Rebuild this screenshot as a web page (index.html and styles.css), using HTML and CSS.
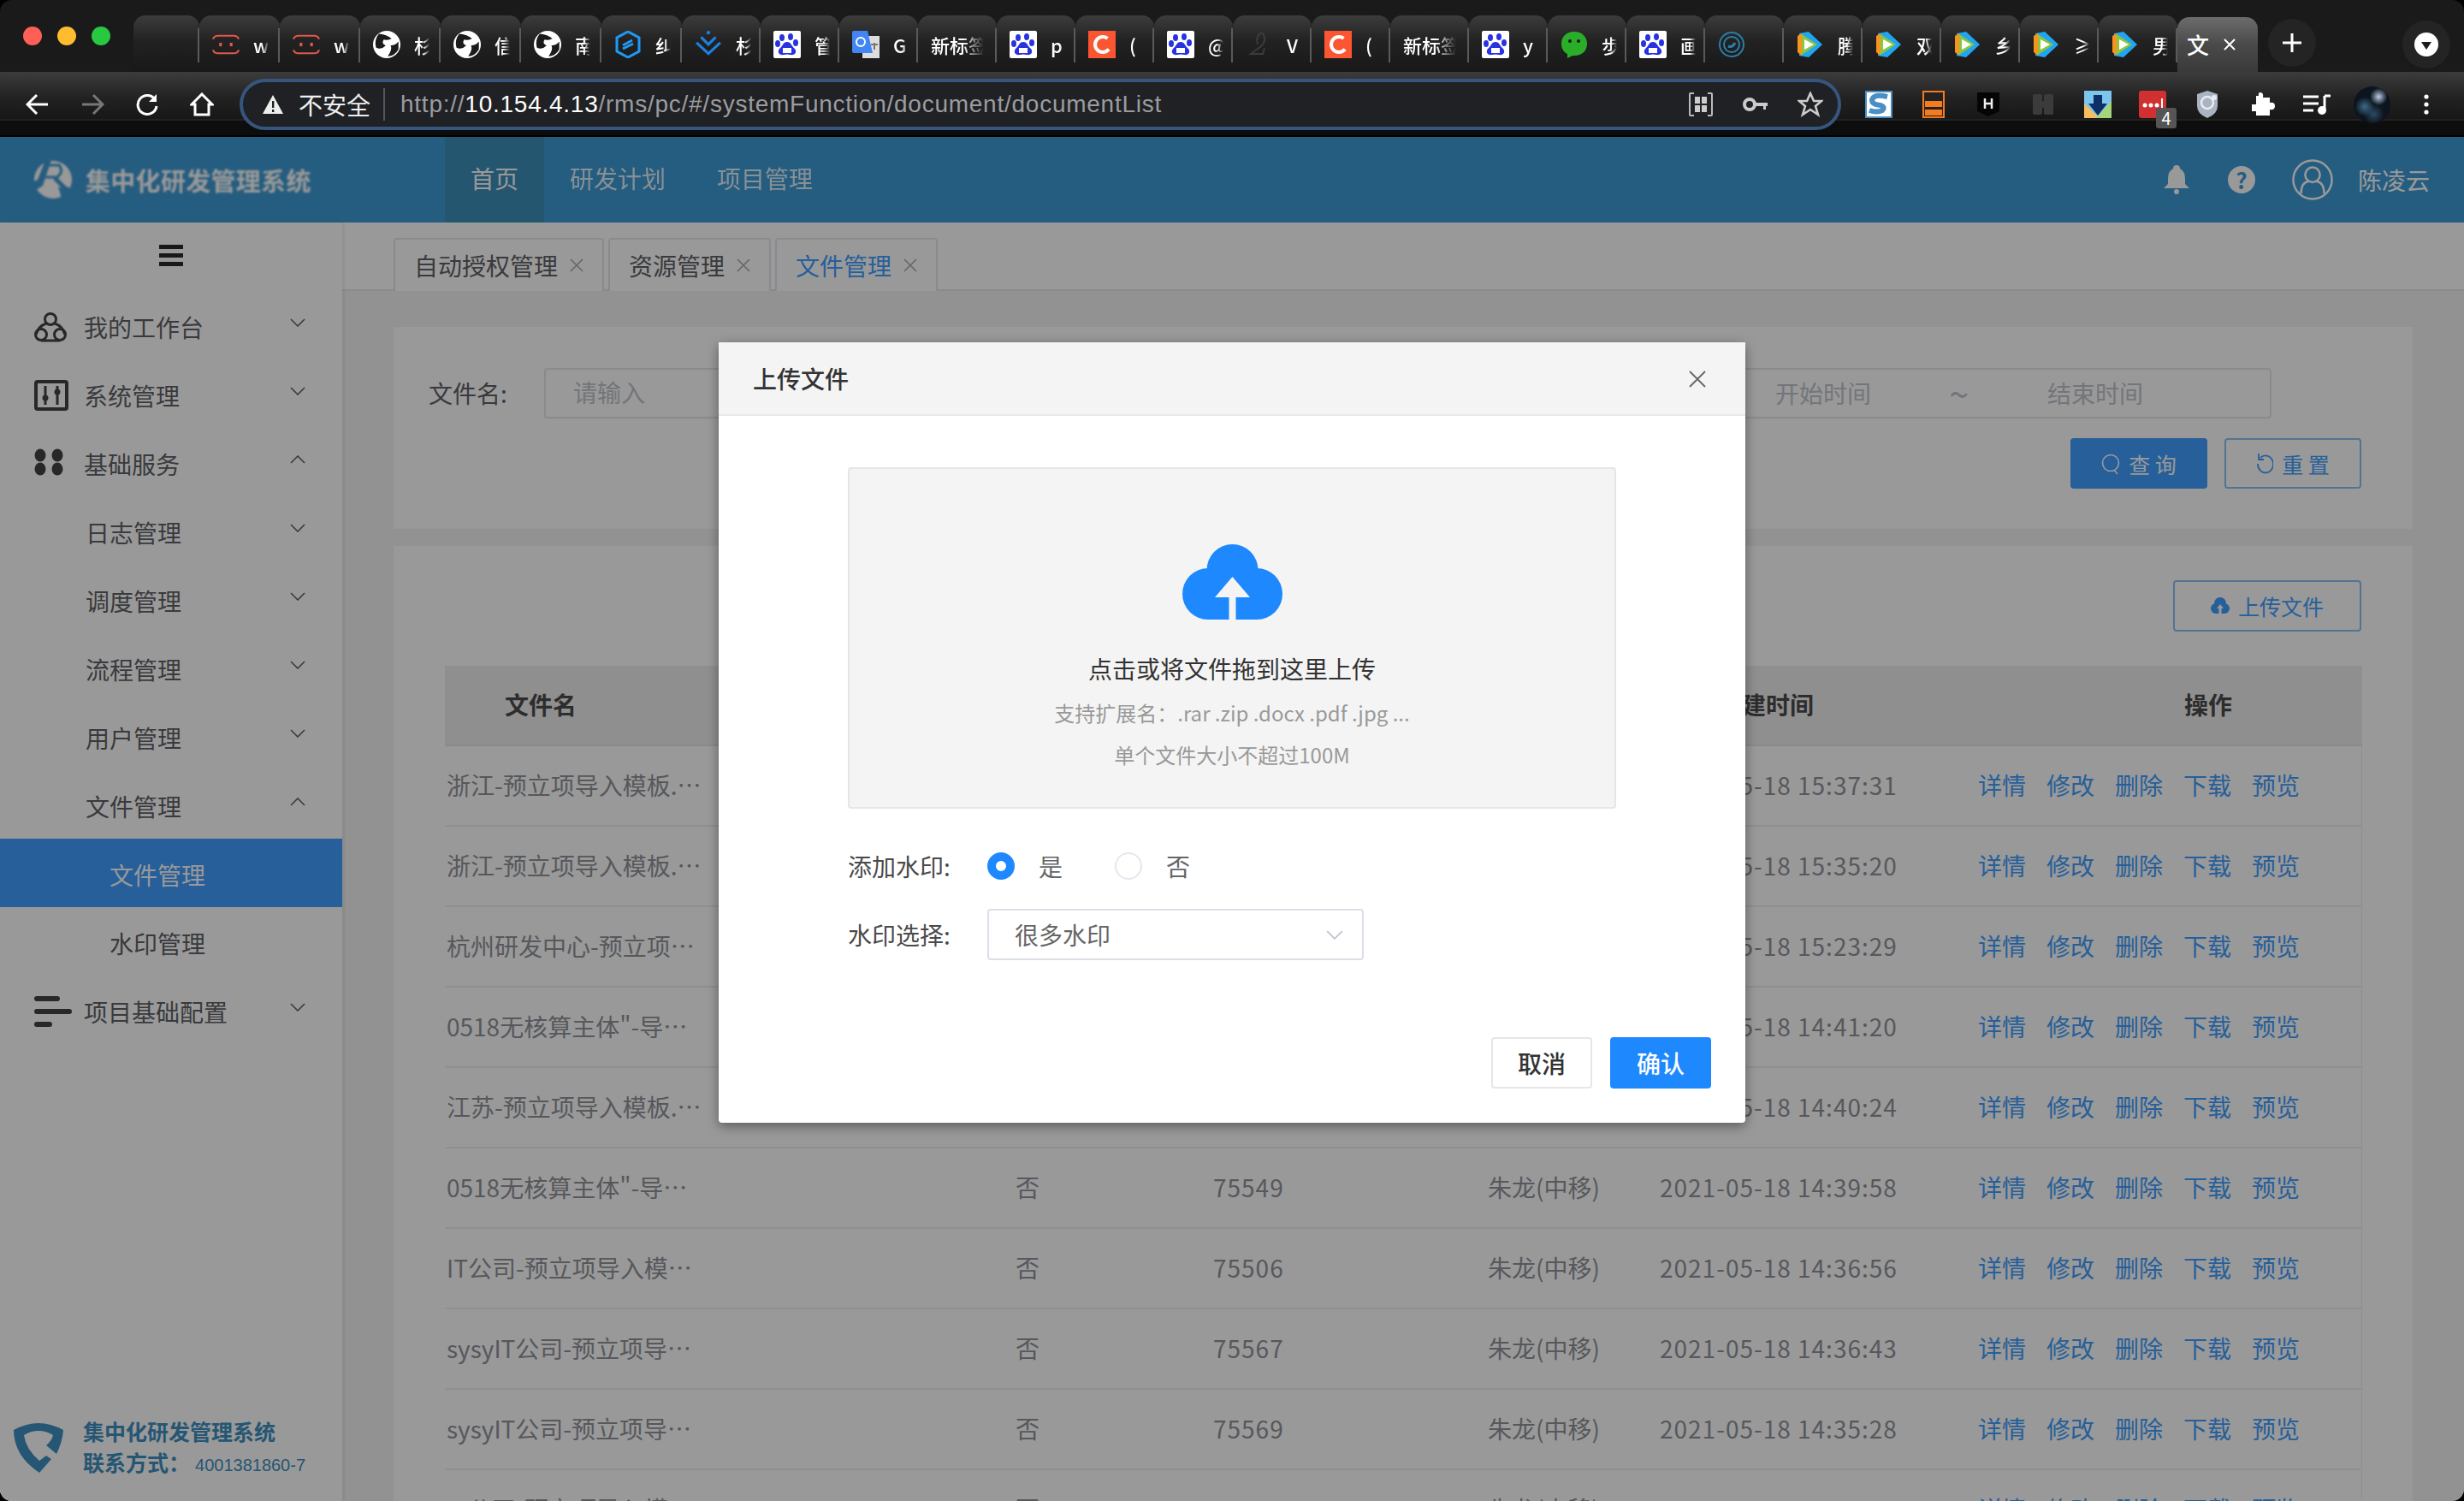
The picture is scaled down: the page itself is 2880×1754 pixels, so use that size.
FILE: index.html
```html
<!DOCTYPE html>
<html lang="zh-CN">
<head>
<meta charset="UTF-8">
<title>文件管理</title>
<link rel="stylesheet" href="styles.css">
</head>
<body>
<svg class="sprite" width="0" height="0">
    <symbol id="i-face" viewBox="0 0 31 22"><path d="M1 5Q2 1 7 1H24Q29 1 30 5M1 17Q2 21 7 21H24Q29 21 30 17" fill="none" stroke="#e2574c" stroke-width="2"/><rect x="8" y="9" width="3" height="4" fill="#e2574c"/><rect x="20" y="9" width="3" height="4" fill="#e2574c"/></symbol>
    <symbol id="i-globe" viewBox="0 0 28 28"><circle cx="14" cy="14" r="14" fill="#fff"/><path d="M6 3Q15 4 19 8Q14 10 11 9Q8 13 13 15Q8 20 3 17Q1 9 6 3ZM26 11Q23 15 18 15Q20 19 15 26Q22 26 26 19Z" fill="#1b1b1b"/></symbol>
    <symbol id="i-hex" viewBox="0 0 28 32"><path d="M14 1L27 8V24L14 31L1 24V8Z" fill="none" stroke="#1e9af5" stroke-width="3"/><path d="M8 17L19 11M8 21L20 15" stroke="#1e9af5" stroke-width="3"/></symbol>
    <symbol id="i-down" viewBox="0 0 30 30"><path d="M2 13L15 25L28 13M7 7L15 15L23 7" fill="none" stroke="#1d7fe0" stroke-width="3"/><circle cx="15" cy="2" r="2" fill="#1d7fe0"/></symbol>
    <symbol id="i-baidu" viewBox="0 0 32 32"><rect width="32" height="32" rx="2" fill="#fff"/><ellipse cx="10" cy="8" rx="3" ry="4" fill="#2932e1"/><ellipse cx="20" cy="7" rx="3" ry="4" fill="#2932e1"/><ellipse cx="5" cy="15" rx="3" ry="4" fill="#2932e1"/><ellipse cx="26" cy="14" rx="3" ry="4" fill="#2932e1"/><path d="M16 13C11 13 11 18 7 21C4 25 7 29 12 28Q16 27 20 28C25 29 28 25 25 21C21 18 21 13 16 13Z" fill="#2932e1"/><rect x="11" y="20" width="10" height="6" fill="#fff"/></symbol>
    <symbol id="i-trans" viewBox="0 0 32 32"><rect x="12" y="6" width="20" height="26" fill="#ddd"/><path d="M0 2Q0 0 2 0H18L24 26H2Q0 26 0 24Z" fill="#4285f4"/><circle cx="10" cy="13" r="5" fill="none" stroke="#fff" stroke-width="2"/><path d="M22 16H30M26 14V22" stroke="#777" stroke-width="2"/></symbol>
    <symbol id="i-csdn" viewBox="0 0 32 32"><rect width="32" height="32" fill="#fc5531"/><circle cx="17" cy="16" r="9" fill="none" stroke="#fff" stroke-width="4" stroke-dasharray="42 15" stroke-dashoffset="-6"/></symbol>
    <symbol id="i-gray" viewBox="0 0 28 32"><path d="M17 2Q24 10 16 18L4 27H18L20 20M17 2Q9 6 12 16" fill="none" stroke="#3b3b3b" stroke-width="2"/></symbol>
    <symbol id="i-wx" viewBox="0 0 32 32"><path d="M16 1C7 1 1 7 1 15C1 21 4 25 8 27L8 32L14 29C24 30 31 24 31 15C31 7 25 1 16 1Z" fill="#2aae2a"/><circle cx="11" cy="12" r="2" fill="#1b1b1b"/><circle cx="21" cy="12" r="2" fill="#1b1b1b"/></symbol>
    <symbol id="i-swirl" viewBox="0 0 32 32"><circle cx="16" cy="16" r="14" fill="none" stroke="#2a7fa8" stroke-width="2"/><circle cx="16" cy="16" r="9" fill="none" stroke="#2a7fa8" stroke-width="2"/><path d="M12 18Q17 20 20 14" fill="none" stroke="#2a7fa8" stroke-width="3"/></symbol>
    <symbol id="i-play" viewBox="0 0 32 32"><path d="M3 3L14 1L30 16L14 31L3 29Z" fill="#22a5f1"/><path d="M1 6L6 3V29L1 25Z" fill="#f7941d"/><path d="M6 4L24 16L6 28Z" fill="#8cc63f"/><path d="M9 10L20 16L9 22Z" fill="#fff"/></symbol>
    <symbol id="i-chev" viewBox="0 0 18 10"><path d="M1 1L9 9L17 1" fill="none" stroke="currentColor" stroke-width="1.6"/></symbol>
</svg>

<div class="window">
    <div class="tabstrip">
        <div class="lights"><i class="red"></i><i class="amber"></i><i class="green"></i></div>
        <div class="tab tab-blank"></div>
        <div class="tab tab-wide"><svg class="fav fav-face"><use href="#i-face"/></svg><span class="tab-title">w</span></div>
        <div class="tab tab-wide"><svg class="fav fav-face"><use href="#i-face"/></svg><span class="tab-title">w</span></div>
        <div class="tab tab-wide"><svg class="fav"><use href="#i-globe"/></svg><span class="tab-title">杉</span></div>
        <div class="tab tab-wide"><svg class="fav"><use href="#i-globe"/></svg><span class="tab-title">信</span></div>
        <div class="tab tab-wide"><svg class="fav"><use href="#i-globe"/></svg><span class="tab-title">南</span></div>
        <div class="tab tab-wide"><svg class="fav"><use href="#i-hex"/></svg><span class="tab-title">纠</span></div>
        <div class="tab"><svg class="fav"><use href="#i-down"/></svg><span class="tab-title">杉</span></div>
        <div class="tab"><svg class="fav"><use href="#i-baidu"/></svg><span class="tab-title">管</span></div>
        <div class="tab"><svg class="fav"><use href="#i-trans"/></svg><span class="tab-title">G</span></div>
        <div class="tab tab-newpage"><span class="tab-title">新标签</span></div>
        <div class="tab"><svg class="fav"><use href="#i-baidu"/></svg><span class="tab-title">p</span></div>
        <div class="tab"><svg class="fav"><use href="#i-csdn"/></svg><span class="tab-title">(</span></div>
        <div class="tab"><svg class="fav"><use href="#i-baidu"/></svg><span class="tab-title">@</span></div>
        <div class="tab"><svg class="fav"><use href="#i-gray"/></svg><span class="tab-title">V</span></div>
        <div class="tab"><svg class="fav"><use href="#i-csdn"/></svg><span class="tab-title">(</span></div>
        <div class="tab tab-newpage"><span class="tab-title">新标签</span></div>
        <div class="tab"><svg class="fav"><use href="#i-baidu"/></svg><span class="tab-title">y</span></div>
        <div class="tab"><svg class="fav"><use href="#i-wx"/></svg><span class="tab-title">歩</span></div>
        <div class="tab"><svg class="fav"><use href="#i-baidu"/></svg><span class="tab-title">画</span></div>
        <div class="tab"><svg class="fav"><use href="#i-swirl"/></svg><span class="tab-title"></span></div>
        <div class="tab"><svg class="fav"><use href="#i-play"/></svg><span class="tab-title">腾</span></div>
        <div class="tab"><svg class="fav"><use href="#i-play"/></svg><span class="tab-title">双</span></div>
        <div class="tab"><svg class="fav"><use href="#i-play"/></svg><span class="tab-title">乡</span></div>
        <div class="tab"><svg class="fav"><use href="#i-play"/></svg><span class="tab-title">≥</span></div>
        <div class="tab"><svg class="fav"><use href="#i-play"/></svg><span class="tab-title">男</span></div>
        <div class="tab tab-active"><span class="tab-title">文</span><svg class="tab-close" width="16" height="16" viewBox="0 0 16 16"><path d="M2 2L14 14M14 2L2 14" stroke="#fff" stroke-width="2"/></svg></div>
        <div class="newtab"><svg width="24" height="24" viewBox="0 0 24 24"><path d="M12 1V23M1 12H23" stroke="#fff" stroke-width="3"/></svg></div>
        <div class="tabmenu"><svg width="28" height="28" viewBox="0 0 28 28"><circle cx="14" cy="14" r="14" fill="#fff"/><path d="M8 11H20L14 20Z" fill="#1b1b1b"/></svg></div>
    </div>

    <div class="toolbar">
        <div class="navbtn"><svg width="28" height="28" viewBox="0 0 28 28"><path d="M26 14H3M13 3L2 14L13 25" fill="none" stroke="#fff" stroke-width="3"/></svg></div>
        <div class="navbtn"><svg width="28" height="28" viewBox="0 0 28 28"><path d="M2 14H25M15 3L26 14L15 25" fill="none" stroke="#777" stroke-width="3"/></svg></div>
        <div class="navbtn"><svg width="28" height="28" viewBox="0 0 28 28"><path d="M23 8A11 11 0 1 0 25 16" fill="none" stroke="#fff" stroke-width="3"/><path d="M25 2V11H16Z" fill="#fff"/></svg></div>
        <div class="navbtn"><svg width="28" height="28" viewBox="0 0 28 28"><path d="M14 2L26 14H22V26H6V14H2Z" fill="none" stroke="#fff" stroke-width="3"/></svg></div>
        <div class="urlbar">
            <svg class="warn" width="26" height="24" viewBox="0 0 26 24"><path d="M13 1L25 23H1Z" fill="#eee"/><rect x="12" y="8" width="2.4" height="8" fill="#202124"/><rect x="12" y="18" width="2.4" height="3" fill="#202124"/></svg>
            <span class="url-state">不安全</span>
            <span class="url-rule"></span>
            <span class="url-text">http://<b>10.154.4.13</b>/rms/pc/#/systemFunction/document/documentList</span>
            <div class="url-actions">
                <svg width="30" height="30" viewBox="0 0 30 30"><path d="M7 2H3Q2 2 2 3V27Q2 28 3 28H7M23 2H27Q28 2 28 3V27Q28 28 27 28H23" fill="none" stroke="#bbb" stroke-width="2"/><rect x="8" y="6" width="6" height="8" fill="#ccc"/><rect x="16" y="6" width="6" height="8" fill="#ccc"/><rect x="8" y="16" width="6" height="8" fill="#ccc"/><rect x="16" y="16" width="6" height="8" fill="#ccc"/></svg>
                <svg width="30" height="30" viewBox="0 0 30 30"><circle cx="8" cy="15" r="6" fill="none" stroke="#ccc" stroke-width="4"/><path d="M14 13H29V17H27V21H24V17H14Z" fill="#ccc"/></svg>
                <svg width="30" height="30" viewBox="0 0 30 30"><path d="M15 2L19 11H28L21 17L24 27L15 21L6 27L9 17L2 11H11Z" fill="none" stroke="#ccc" stroke-width="2.6"/></svg>
            </div>
        </div>
        <div class="ext"><svg width="32" height="32" viewBox="0 0 32 32"><rect width="32" height="32" fill="#fff"/><rect width="32" height="32" fill="none" stroke="#4a8fc4" stroke-width="4"/><path d="M26 7Q10 3 8 11Q8 16 18 17Q24 19 20 23Q14 26 5 23" fill="none" stroke="#4a8fc4" stroke-width="6"/></svg></div>
        <div class="ext"><svg width="26" height="32" viewBox="0 0 26 32"><rect x="1" y="1" width="24" height="30" fill="#222" stroke="#f47b20" stroke-width="2"/><rect x="3" y="12" width="20" height="7" fill="#f47b20"/><rect x="3" y="22" width="20" height="7" fill="#f47b20"/></svg></div>
        <div class="ext"><svg width="28" height="28" viewBox="0 0 28 28"><path d="M1 0H27V22L14 28L1 22Z" fill="#050505"/><path d="M10 7V19M18 7V19M10 13H18" stroke="#eee" stroke-width="2.5"/></svg></div>
        <div class="ext"><svg width="24" height="24" viewBox="0 0 24 24"><rect width="11" height="24" rx="2" fill="#3b3b3b"/><rect x="13" width="11" height="24" rx="2" fill="#3b3b3b"/><circle cx="12" cy="12" r="4" fill="#3b3b3b"/></svg></div>
        <div class="ext"><svg width="32" height="32" viewBox="0 0 32 32"><rect width="32" height="32" fill="#7cc5ec"/><path d="M0 32V15L16 30V32Z" fill="#f6bd60"/><path d="M32 12V32H14L16 30Z" fill="#a5d47a"/><path d="M11 5H21V15H27L16 29L5 15H11Z" fill="#0d2f66"/></svg></div>
        <div class="ext ext-badged"><svg width="32" height="32" viewBox="0 0 32 32"><rect width="32" height="32" rx="3" fill="#d13030"/><circle cx="7" cy="17" r="2.5" fill="#fff"/><circle cx="14" cy="17" r="2.5" fill="#fff"/><circle cx="21" cy="17" r="2.5" fill="#fff"/><rect x="26" y="9" width="2" height="11" fill="#fff"/></svg><span class="ext-badge">4</span></div>
        <div class="ext"><svg width="24" height="32" viewBox="0 0 24 32"><path d="M12 0L24 4V18Q24 27 12 32Q0 27 0 18V4Z" fill="#aab3c2"/><circle cx="12" cy="14" r="7" fill="none" stroke="#e8ecf2" stroke-width="2.5"/><circle cx="20" cy="8" r="3" fill="#e8ecf2"/></svg></div>
        <div class="ext"><svg width="30" height="28" viewBox="0 0 30 28"><path d="M11 4H8V14H3V22H8V27H24V20Q30 21 30 16Q30 11 24 12V6H16Q17 0 13 0Q10 0 11 4Z" fill="#fff"/></svg></div>
        <div class="ext"><svg width="32" height="24" viewBox="0 0 32 24"><path d="M0 3H18M0 11H18M0 19H12" stroke="#fff" stroke-width="3"/><path d="M25 2H32M25 2V19" stroke="#fff" stroke-width="3"/><circle cx="22" cy="19" r="5" fill="#fff"/></svg></div>
        <div class="ext"><div class="avatar"></div></div>
        <div class="ext"><svg width="6" height="24" viewBox="0 0 6 24"><circle cx="3" cy="3" r="2.6" fill="#fff"/><circle cx="3" cy="12" r="2.6" fill="#fff"/><circle cx="3" cy="21" r="2.6" fill="#fff"/></svg></div>
    </div>

    <div class="app">
        <header class="topbar">
            <div class="logo">
                <svg width="48" height="44" viewBox="0 0 48 44">
                    <circle cx="24" cy="22" r="22" fill="#fff"/>
                    <path d="M15 -1L22 -1L12 29L-2 38L-4 26L6 22Z" fill="#3f9bd5"/>
                    <path d="M-2 0H12L3 10L0 36H-2Z" fill="#3f9bd5"/>
                    <path d="M18 5H31Q37 12 29 19H15" fill="none" stroke="#3f9bd5" stroke-width="3"/>
                    <path d="M26 20L38 32L48 36" fill="none" stroke="#3f9bd5" stroke-width="5"/>
                    <path d="M20 24L40 38L48 44H-2L2 34Z" fill="#3f9bd5" opacity="0"/>
                    <path d="M30 30L48 38V44H34Z" fill="#3f9bd5"/>
                </svg>
                <span class="logo-name">集中化研发管理系统</span>
            </div>
            <nav class="topnav">
                <a class="topnav-item is-active">首页</a>
                <a class="topnav-item">研发计划</a>
                <a class="topnav-item">项目管理</a>
            </nav>
            <div class="userbox">
                <svg class="bell" width="32" height="34" viewBox="0 0 32 34"><path d="M16 0Q20 0 20 4Q26 7 26 16V22L31 27H1L6 22V16Q6 7 12 4Q12 0 16 0Z" fill="#fff"/><rect x="13" y="28" width="6" height="6" rx="3" fill="#fff"/></svg>
                <span class="help">?</span>
                <svg class="user" width="48" height="48" viewBox="0 0 50 50"><circle cx="25" cy="25" r="23.5" fill="none" stroke="#fff" stroke-width="2.6"/><circle cx="25" cy="19" r="9" fill="none" stroke="#fff" stroke-width="2.6"/><path d="M11 42Q11 28 20 27M39 42Q39 28 30 27" fill="none" stroke="#fff" stroke-width="2.6"/></svg>
                <span class="username">陈凌云</span>
            </div>
        </header>

        <div class="main">
            <aside class="side">
                <div class="burger"><i></i><i></i><i></i></div>
                <div class="menu-item">
                    <svg class="menu-icon" width="38" height="36" viewBox="0 0 38 36"><circle cx="19" cy="9" r="6.5" fill="none" stroke="#444" stroke-width="3"/><circle cx="8" cy="27" r="6.5" fill="none" stroke="#444" stroke-width="3"/><circle cx="30" cy="27" r="6.5" fill="none" stroke="#444" stroke-width="3"/><path d="M14 14Q5 17 2 27M24 14Q33 17 36 27M8 34H30" fill="none" stroke="#444" stroke-width="3"/></svg>
                    <span>我的工作台</span><svg class="chev"><use href="#i-chev"/></svg>
                </div>
                <div class="menu-item">
                    <svg class="menu-icon" width="40" height="36" viewBox="0 0 40 36"><rect x="2" y="2" width="36" height="32" rx="2" fill="none" stroke="#444" stroke-width="4"/><path d="M13 7V29M27 7V29" stroke="#444" stroke-width="3"/><circle cx="13" cy="21" r="3.5" fill="#444"/><circle cx="27" cy="14" r="3.5" fill="#444"/></svg>
                    <span>系统管理</span><svg class="chev"><use href="#i-chev"/></svg>
                </div>
                <div class="menu-item">
                    <svg class="menu-icon" width="34" height="32" viewBox="0 0 34 32"><ellipse cx="7" cy="8" rx="6.5" ry="7.5" fill="#444"/><ellipse cx="27" cy="8" rx="6.5" ry="7.5" fill="#444"/><ellipse cx="7" cy="24" rx="6.5" ry="7.5" fill="#444"/><ellipse cx="27" cy="24" rx="6.5" ry="7.5" fill="#444"/></svg>
                    <span>基础服务</span><svg class="chev chev-up"><use href="#i-chev"/></svg>
                </div>
                <div class="menu-item menu-sub"><span>日志管理</span><svg class="chev"><use href="#i-chev"/></svg></div>
                <div class="menu-item menu-sub"><span>调度管理</span><svg class="chev"><use href="#i-chev"/></svg></div>
                <div class="menu-item menu-sub"><span>流程管理</span><svg class="chev"><use href="#i-chev"/></svg></div>
                <div class="menu-item menu-sub"><span>用户管理</span><svg class="chev"><use href="#i-chev"/></svg></div>
                <div class="menu-item menu-sub"><span>文件管理</span><svg class="chev chev-up"><use href="#i-chev"/></svg></div>
                <div class="menu-item menu-leaf is-active"><span>文件管理</span></div>
                <div class="menu-item menu-leaf"><span>水印管理</span></div>
                <div class="menu-item">
                    <svg class="menu-icon" width="44" height="36" viewBox="0 0 44 36"><path d="M3 3H27M3 18H41M3 33H18" stroke="#444" stroke-width="6" stroke-linecap="round"/></svg>
                    <span>项目基础配置</span><svg class="chev"><use href="#i-chev"/></svg>
                </div>
                <div class="side-foot">
                    <svg width="58" height="58" viewBox="0 0 58 58"><path d="M29 0Q43 0 58 8Q57 22 50 36L38 26Q45 20 46 14Q38 9 29 9Q20 9 12 14Q14 30 30 44L38 38L44 42L30 58Q0 38 0 8Q15 0 29 0Z" fill="#3f8fc0"/></svg>
                    <div class="foot-text">
                        <div class="foot-name">集中化研发管理系统</div>
                        <div class="foot-phone">联系方式：<span>4001381860-7</span></div>
                    </div>
                </div>
            </aside>

            <section class="content">
                <div class="pagetabs">
                    <div class="pagetab">自动授权管理<svg width="18" height="18" viewBox="0 0 18 18"><path d="M2 2L16 16M16 2L2 16" stroke="#aaa" stroke-width="1.6"/></svg></div>
                    <div class="pagetab">资源管理<svg width="18" height="18" viewBox="0 0 18 18"><path d="M2 2L16 16M16 2L2 16" stroke="#aaa" stroke-width="1.6"/></svg></div>
                    <div class="pagetab is-active">文件管理<svg width="18" height="18" viewBox="0 0 18 18"><path d="M2 2L16 16M16 2L2 16" stroke="#aaa" stroke-width="1.6"/></svg></div>
                </div>

                <div class="page">
                    <div class="card card-filter">
                        <div class="filter-row">
                            <label class="filter-label">文件名:</label>
                            <div class="input">请输入</div>
                            <div class="daterange">
                                <span class="date-start">开始时间</span>
                                <span class="date-sep">~</span>
                                <span>结束时间</span>
                            </div>
                        </div>
                        <div class="filter-btns">
                            <button class="btn btn-primary"><svg width="22" height="26" viewBox="0 0 22 26"><circle cx="11" cy="12" r="9.5" fill="none" stroke="#fff" stroke-width="1.6"/><path d="M15 20L19 25" stroke="#fff" stroke-width="1.6"/></svg>查 询</button>
                            <button class="btn btn-line"><svg width="20" height="26" viewBox="0 0 20 26"><path d="M5 6A9 10 0 1 1 2 13" fill="none" stroke="#409eff" stroke-width="1.8"/><path d="M3 1V8H9" fill="none" stroke="#409eff" stroke-width="1.8"/></svg>重 置</button>
                        </div>
                    </div>

                    <div class="card card-list">
                        <div class="list-tools">
                            <button class="btn btn-line btn-upload"><svg width="22" height="20" viewBox="0 0 22 20"><circle cx="6" cy="13" r="6" fill="#409eff"/><circle cx="16" cy="13" r="6" fill="#409eff"/><circle cx="11" cy="7" r="7" fill="#409eff"/><rect x="6" y="10" width="10" height="9" fill="#409eff"/><path d="M11 8L15 13H12.5V20H9.5V13H7Z" fill="#fff"/></svg>上传文件</button>
                        </div>
                        <table class="doc-table">
                            <colgroup><col class="col-name"><col class="col-mark"><col class="col-id"><col class="col-user"><col class="col-time"><col class="col-act"></colgroup>
                            <thead>
                                <tr><th class="th-name">文件名</th><th></th><th></th><th></th><th class="th-time">创建时间</th><th class="th-act">操作</th></tr>
                            </thead>
                            <tbody>
                                <tr><td><div class="fname">浙江-预立项导入模板.xlsx</div></td><td></td><td></td><td></td><td class="num">2021-05-18 15:37:31</td><td class="acts"><a>详情</a><a>修改</a><a>删除</a><a>下载</a><a>预览</a></td></tr>
                                <tr><td><div class="fname">浙江-预立项导入模板.xlsx</div></td><td></td><td></td><td></td><td class="num">2021-05-18 15:35:20</td><td class="acts"><a>详情</a><a>修改</a><a>删除</a><a>下载</a><a>预览</a></td></tr>
                                <tr><td><div class="fname">杭州研发中心-预立项导入模板.xlsx</div></td><td></td><td></td><td></td><td class="num">2021-05-18 15:23:29</td><td class="acts"><a>详情</a><a>修改</a><a>删除</a><a>下载</a><a>预览</a></td></tr>
                                <tr><td><div class="fname">0518无核算主体"-导入模板.xlsx</div></td><td></td><td></td><td></td><td class="num">2021-05-18 14:41:20</td><td class="acts"><a>详情</a><a>修改</a><a>删除</a><a>下载</a><a>预览</a></td></tr>
                                <tr><td><div class="fname">江苏-预立项导入模板.xlsx</div></td><td></td><td></td><td></td><td class="num">2021-05-18 14:40:24</td><td class="acts"><a>详情</a><a>修改</a><a>删除</a><a>下载</a><a>预览</a></td></tr>
                                <tr><td><div class="fname">0518无核算主体"-导入模板.xlsx</div></td><td>否</td><td class="num">75549</td><td>朱龙(中移)</td><td class="num">2021-05-18 14:39:58</td><td class="acts"><a>详情</a><a>修改</a><a>删除</a><a>下载</a><a>预览</a></td></tr>
                                <tr><td><div class="fname">IT公司-预立项导入模板.xlsx</div></td><td>否</td><td class="num">75506</td><td>朱龙(中移)</td><td class="num">2021-05-18 14:36:56</td><td class="acts"><a>详情</a><a>修改</a><a>删除</a><a>下载</a><a>预览</a></td></tr>
                                <tr><td><div class="fname">sysyIT公司-预立项导入模板.xlsx</div></td><td>否</td><td class="num">75567</td><td>朱龙(中移)</td><td class="num">2021-05-18 14:36:43</td><td class="acts"><a>详情</a><a>修改</a><a>删除</a><a>下载</a><a>预览</a></td></tr>
                                <tr><td><div class="fname">sysyIT公司-预立项导入模板.xlsx</div></td><td>否</td><td class="num">75569</td><td>朱龙(中移)</td><td class="num">2021-05-18 14:35:28</td><td class="acts"><a>详情</a><a>修改</a><a>删除</a><a>下载</a><a>预览</a></td></tr>
                                <tr><td><div class="fname">IT公司-预立项导入模板.xlsx</div></td><td>否</td><td class="num">75570</td><td>朱龙(中移)</td><td class="num">2021-05-18 14:35:10</td><td class="acts"><a>详情</a><a>修改</a><a>删除</a><a>下载</a><a>预览</a></td></tr>
                            </tbody>
                        </table>
                    </div>
                </div>
            </section>
        </div>

        <div class="mask"></div>

        <div class="modal">
            <div class="modal-head">
                <span class="modal-title">上传文件</span>
                <svg class="modal-x" width="20" height="20" viewBox="0 0 20 20"><path d="M1 1L19 19M19 1L1 19" stroke="#666" stroke-width="1.8"/></svg>
            </div>
            <div class="modal-body">
                <div class="dropzone">
                    <svg class="cloud" width="117" height="88" viewBox="0 0 117 88">
                        <circle cx="30" cy="58" r="30" fill="#1e88ff"/><circle cx="87" cy="58" r="30" fill="#1e88ff"/><circle cx="58.5" cy="30" r="30" fill="#1e88ff"/><rect x="30" y="40" width="57" height="48" fill="#1e88ff"/>
                        <path d="M58.5 38L79 62H62.5V88H54.5V62H38Z" fill="#f4f4f4"/>
                    </svg>
                    <div class="drop-main">点击或将文件拖到这里上传</div>
                    <div class="drop-hint">支持扩展名：.rar .zip .docx .pdf .jpg ...</div>
                    <div class="drop-hint drop-limit">单个文件大小不超过100M</div>
                </div>
                <div class="form-row">
                    <label class="form-label">添加水印:</label>
                    <span class="radio is-on"></span><span class="radio-text">是</span>
                    <span class="radio"></span><span class="radio-text">否</span>
                </div>
                <div class="form-row">
                    <label class="form-label">水印选择:</label>
                    <div class="select">很多水印<svg class="chev"><use href="#i-chev"/></svg></div>
                </div>
            </div>
            <div class="modal-foot">
                <button class="mbtn">取消</button>
                <button class="mbtn mbtn-ok">确认</button>
            </div>
        </div>
    </div>
</div>
</body>
</html>
```

FILE: styles.css
```css
* {
    box-sizing: border-box;
}

html, body {
    margin: 0;
    background: #000;
}

body {
    font-family: "Noto Sans CJK SC", "Liberation Sans", sans-serif;
    font-size: 28px;
    color: #606266;
}

.sprite {
    position: absolute;
}

.window {
    width: 2880px;
    height: 1754px;
    display: flex;
    flex-direction: column;
    overflow: hidden;
    border-radius: 14px;
}

/* browser tabs */
.tabstrip {
    height: 84px;
    flex: none;
    display: flex;
    background: #1a1a1a;
    color: #fff;
}

.lights {
    width: 156px;
    flex: none;
    display: flex;
    align-items: center;
    gap: 18px;
    padding-left: 27px;
}

.lights i {
    width: 22px;
    height: 22px;
    border-radius: 50%;
}

.red { background: #fe5f57; }
.amber { background: #febc2e; }
.green { background: #28c840; }

.tab {
    position: relative;
    width: 92px;
    height: 66px;
    margin-top: 18px;
    flex: none;
    display: flex;
    align-items: flex-start;
    gap: 16px;
    padding: 18px 0 0 15px;
    border-radius: 14px 14px 0 0;
    background: linear-gradient(#3c3c3c, #222 45%, #181818);
}

.tab::after {
    content: "";
    position: absolute;
    right: 0;
    top: 15px;
    width: 2px;
    height: 40px;
    background: #5a5a5a;
}

.tab-blank { width: 77px; }
.tab-wide { width: 94px; }

.fav {
    width: 32px;
    height: 32px;
    flex: none;
}

.tab-title {
    width: 18px;
    height: 32px;
    overflow: hidden;
    white-space: nowrap;
    font-size: 22px;
    line-height: 32px;
    font-weight: 500;
    -webkit-mask-image: linear-gradient(90deg, #000 60%, transparent);
    mask-image: linear-gradient(90deg, #000 60%, transparent);
}

.tab-newpage .tab-title {
    width: 62px;
    font-size: 22px;
}

.tab-active {
    width: 94px;
    margin-top: 20px;
    height: 64px;
    gap: 16px;
    padding: 16px 0 0 11px;
    background: linear-gradient(#6c6c6c, #4a4a4a 50%, #3a3a3a);
}

.tab-active::after {
    display: none;
}

.tab-active .tab-title {
    width: 26px;
    font-size: 26px;
    -webkit-mask-image: none;
    mask-image: none;
}

.tab-close {
    margin-top: 8px;
}

.newtab {
    width: 56px;
    height: 56px;
    margin: 22px 0 0 12px;
    border-radius: 50%;
    background: #242424;
    display: flex;
    align-items: center;
    justify-content: center;
}

.tabmenu {
    width: 56px;
    height: 56px;
    margin: 24px 16px 0 auto;
    border-radius: 50%;
    background: #242424;
    display: flex;
    align-items: center;
    justify-content: center;
}

/* browser toolbar */
.toolbar {
    height: 76px;
    flex: none;
    display: flex;
    align-items: center;
    padding-left: 12px;
    background: linear-gradient(#3c3c3c, #222 30px, #171717 55px, #222 55px, #222 57px, #0d0d0d 57px, #0d0d0d 74px, #000 74px);
}

.navbtn {
    width: 64px;
    display: flex;
    justify-content: center;
}

.urlbar {
    width: 1872px;
    height: 60px;
    margin: 0 12px;
    display: flex;
    align-items: center;
    padding: 0 17px 0 22px;
    border: 4px solid #36557f;
    border-radius: 30px;
    background: #202124;
    color: #9a9ca0;
    font-family: "Liberation Sans", sans-serif;
    font-size: 28px;
}

.warn {
    flex: none;
}

.url-state {
    margin-left: 17px;
    color: #eee;
    font-family: "Noto Sans CJK SC", sans-serif;
}

.url-rule {
    width: 2px;
    height: 38px;
    margin: 0 18px 0 15px;
    background: #55575b;
}

.url-text {
    letter-spacing: 0.75px;
}

.url-text b {
    font-weight: 400;
    color: #fff;
}

.url-actions {
    margin-left: auto;
    display: flex;
    gap: 34px;
}

.ext {
    position: relative;
    width: 64px;
    height: 44px;
    flex: none;
    display: flex;
    align-items: center;
    justify-content: center;
}

.ext-badge {
    position: absolute;
    left: 36px;
    top: 26px;
    width: 24px;
    height: 24px;
    border-radius: 3px;
    background: #555;
    color: #fff;
    font-size: 20px;
    line-height: 24px;
    text-align: center;
}

.avatar {
    width: 43px;
    height: 43px;
    border-radius: 50%;
    background:
        radial-gradient(circle at 68% 28%, #c5ced8 0, #6c7f94 10%, transparent 24%),
        radial-gradient(circle at 30% 55%, #3f6a8a 0, transparent 30%),
        radial-gradient(circle at 55% 75%, #2c4a63 0, transparent 30%),
        #0c141d;
}

/* app header */
.app {
    position: relative;
    flex: 1;
    display: flex;
    flex-direction: column;
    overflow: hidden;
    background: #f3f3f3;
}

.topbar {
    height: 100px;
    flex: none;
    display: flex;
    align-items: center;
    background: #3f9bd5;
    color: #fff;
}

.logo {
    width: 520px;
    display: flex;
    align-items: center;
    gap: 14px;
    padding-left: 38px;
    filter: blur(0.8px);
}

.logo-name {
    font-size: 29px;
    font-weight: 700;
    letter-spacing: 0.3px;
    white-space: nowrap;
}

.topnav {
    display: flex;
    height: 100%;
}

.topnav-item {
    padding: 0 30px;
    line-height: 96px;
    opacity: 0.85;
}

.topnav-item.is-active {
    background: #3e8fbb;
    opacity: 1;
}

.userbox {
    margin-left: auto;
    display: flex;
    align-items: center;
    padding-right: 40px;
}

.help {
    width: 32px;
    height: 32px;
    margin-left: 44px;
    border-radius: 50%;
    background: #fff;
    color: #3f9bd5;
    font-size: 26px;
    font-weight: 700;
    line-height: 32px;
    text-align: center;
}

.user {
    margin-left: 43px;
}

.username {
    margin-left: 29px;
}

/* sidebar */
.main {
    flex: 1;
    min-height: 0;
    display: flex;
}

.side {
    width: 400px;
    flex: none;
    display: flex;
    flex-direction: column;
    background: #fff;
    box-shadow: 2px 0 4px rgba(0, 0, 0, 0.08);
    z-index: 0;
}

.burger {
    height: 80px;
    flex: none;
    display: flex;
    flex-direction: column;
    align-items: center;
    padding-top: 26px;
    gap: 5px;
}

.burger i {
    width: 28px;
    height: 5px;
    background: #2a2a2a;
}

.menu-item {
    height: 80px;
    flex: none;
    display: flex;
    align-items: center;
    padding: 4px 0 0 98px;
    position: relative;
    color: #606266;
}

.menu-icon {
    position: absolute;
    left: 40px;
    top: 24px;
}

.menu-sub {
    padding-left: 100px;
}

.menu-leaf {
    padding-left: 128px;
}

.menu-item.is-active {
    background: #409eff;
    color: #fff;
}

.chev {
    width: 18px;
    height: 10px;
    color: #606266;
}

.menu-item .chev {
    position: absolute;
    left: 339px;
    top: 32px;
}

.chev-up {
    transform: rotate(180deg);
}

.side-foot {
    margin-top: auto;
    padding: 0 0 24px 16px;
    display: flex;
    align-items: center;
    gap: 23px;
}

.foot-text {
    color: #3f8fc0;
}

.foot-name {
    font-size: 25px;
    font-weight: 700;
    line-height: 36px;
    white-space: nowrap;
}

.foot-phone {
    font-size: 25px;
    font-weight: 700;
    line-height: 36px;
    white-space: nowrap;
}

.foot-phone span {
    margin-left: 6px;
    font-family: "Liberation Sans", sans-serif;
    font-size: 20px;
    font-weight: 400;
}

/* page area */
.content {
    flex: 1;
    min-width: 0;
}

.pagetabs {
    height: 80px;
    display: flex;
    align-items: flex-end;
    gap: 5px;
    padding-left: 60px;
    background: #fff;
    border-bottom: 2px solid #e4e7ed;
}

.pagetab {
    height: 62px;
    display: flex;
    align-items: center;
    gap: 13px;
    padding: 0 21px 0 22px;
    border: 2px solid #e4e7ed;
    border-bottom: none;
    border-radius: 4px 4px 0 0;
    background: #fff;
    margin-bottom: -2px;
}

.pagetab.is-active {
    color: #409eff;
}

.page {
    padding: 42px 60px 0;
}

.card {
    background: #fff;
}

.card-filter {
    height: 236px;
    padding-top: 48px;
}

.filter-row {
    display: flex;
    align-items: center;
    padding-left: 41px;
}

.filter-label {
    width: 135px;
    margin-top: -2px;
}

.input {
    width: 500px;
    height: 59px;
    padding-left: 32px;
    border: 2px solid #e4e7ed;
    border-radius: 4px;
    color: #c0c4cc;
    line-height: 53px;
}

.daterange {
    width: 645px;
    height: 59px;
    margin-left: auto;
    margin-right: 165px;
    display: flex;
    align-items: center;
    padding: 0 0 2px 63px;
    border: 2px solid #e4e7ed;
    border-radius: 4px;
    color: #c0c4cc;
}

.date-start {
    width: 203px;
}

.date-sep {
    width: 115px;
    font-size: 42px;
    line-height: 1;
}

.filter-btns {
    margin-top: 23px;
    padding-right: 60px;
    display: flex;
    justify-content: flex-end;
    gap: 20px;
}

.btn {
    width: 160px;
    height: 59px;
    display: flex;
    align-items: center;
    justify-content: center;
    gap: 10px;
    border-radius: 4px;
    font-family: inherit;
    font-size: 25px;
}

.btn-primary {
    border: none;
    background: #409eff;
    color: #fff;
}

.btn-line {
    border: 2px solid #8cc0f5;
    background: #fff;
    color: #409eff;
}

.card-list {
    margin-top: 20px;
    padding: 40px 60px 0;
    height: 1200px;
}

.list-tools {
    display: flex;
    justify-content: flex-end;
    margin-bottom: 40px;
}

.btn-upload {
    width: 220px;
    height: 60px;
}

/* table */
.doc-table {
    width: 2240px;
    table-layout: fixed;
    border-collapse: collapse;
    border-right: 1px solid #ebeef5;
}

.col-name { width: 667px; }
.col-mark { width: 231px; }
.col-id { width: 321px; }
.col-user { width: 201px; }
.col-time { width: 372px; }
.col-act { width: 448px; }

.doc-table th {
    height: 93px;
    padding: 0 0 2px;
    text-align: left;
    background: #eee;
    border-bottom: 2px solid #e4e7ed;
    color: #4c4c4c;
    font-weight: 700;
}

.doc-table .th-name { padding-left: 70px; }
.doc-table .th-time { padding-left: 68px; }
.doc-table .th-act { padding-left: 241px; }

.doc-table td {
    height: 94px;
    padding: 0 0 2px;
    border-bottom: 2px solid #ebeef5;
    color: #909399;
    white-space: nowrap;
}

.doc-table .num {
    letter-spacing: 1px;
}

.fname {
    width: 300px;
    padding-left: 2px;
    overflow: hidden;
    text-overflow: ellipsis;
    white-space: nowrap;
}

.acts a {
    margin-right: 24px;
    color: #409eff;
}

/* dialog */
.mask {
    position: absolute;
    inset: 0;
    background: rgba(0, 0, 0, 0.4);
}

.modal {
    position: absolute;
    left: 840px;
    top: 240px;
    width: 1200px;
    height: 912px;
    display: flex;
    flex-direction: column;
    background: #fff;
    border-radius: 4px;
    box-shadow: 0 4px 14px rgba(0, 0, 0, 0.4);
}

.modal-head {
    height: 86px;
    flex: none;
    display: flex;
    align-items: center;
    justify-content: space-between;
    padding: 0 46px 0 40px;
    background: #f4f4f4;
    border-bottom: 2px solid #e8e8e8;
}

.modal-title {
    color: #333;
    font-weight: 500;
}

.modal-x {
    margin-top: 2px;
}

.modal-body {
    padding: 60px 151px 0;
}

.dropzone {
    height: 399px;
    display: flex;
    flex-direction: column;
    align-items: center;
    padding-top: 88px;
    background: #f4f4f4;
    border: 2px solid #e6e6e6;
    border-radius: 4px;
}

.cloud {
    flex: none;
}

.drop-main {
    margin-top: 37px;
    color: #333;
    line-height: 40px;
}

.drop-hint {
    margin-top: 14px;
    color: #999;
    font-size: 24px;
    line-height: 36px;
}

.drop-limit {
    margin-top: 13px;
}

.form-row {
    height: 60px;
    margin-top: 20px;
    display: flex;
    align-items: center;
    color: #4a4a4a;
}

.dropzone + .form-row {
    margin-top: 37px;
}

.form-label {
    width: 163px;
    flex: none;
    white-space: nowrap;
}

.radio {
    width: 32px;
    height: 32px;
    flex: none;
    border: 2px solid #e4e7ed;
    border-radius: 50%;
}

.radio.is-on {
    border: 10px solid #1e88ff;
}

.radio-text {
    width: 89px;
    margin-left: 28px;
    color: #666;
}

.select {
    width: 440px;
    height: 60px;
    display: flex;
    align-items: center;
    justify-content: space-between;
    padding: 0 22px 0 30px;
    border: 2px solid #dcdfe6;
    border-radius: 4px;
    color: #666;
}

.select .chev {
    width: 20px;
    height: 11px;
    color: #c0c4cc;
}

.modal-foot {
    margin-top: auto;
    padding: 0 40px 40px;
    display: flex;
    justify-content: flex-end;
    gap: 21px;
}

.mbtn {
    width: 118px;
    height: 60px;
    border: 2px solid #e6e6e6;
    border-radius: 4px;
    background: #fff;
    color: #333;
    font-family: inherit;
    font-size: 28px;
    font-weight: 500;
}

.mbtn-ok {
    border: none;
    background: #1e88ff;
    color: #fff;
}
```
